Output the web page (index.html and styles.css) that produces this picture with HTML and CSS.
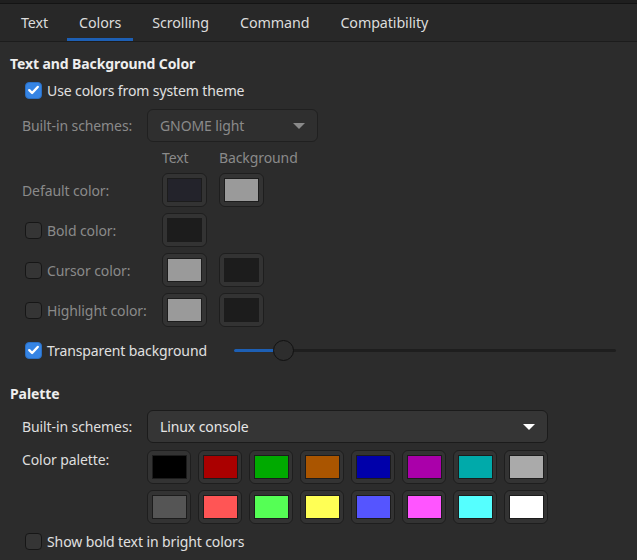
FILE: index.html
```html
<!DOCTYPE html>
<html>
<head>
<meta charset="utf-8">
<link rel="stylesheet" href="styles.css">
</head>
<body>
<div class="topstrip"></div>
<nav class="tabs">
  <div class="tab">Text</div>
  <div class="tab active">Colors</div>
  <div class="tab">Scrolling</div>
  <div class="tab">Command</div>
  <div class="tab">Compatibility</div>
</nav>
<main class="page">
  <h2 class="heading h1">Text and Background Color</h2>
  <label class="check-row r-sys"><span class="cb on"><svg viewBox="0 0 16 16"><path d="M3.5 8.2l3 3 6-6.4" /></svg></span><span>Use colors from system theme</span></label>

  <div class="scheme-row r-s1 disabled">
    <span class="lbl">Built-in schemes:</span>
    <div class="dropdown dis small"><span>GNOME light</span><span class="arrow"></span></div>
  </div>

  <div class="grid">
    <span></span><span class="colhead">Text</span><span class="colhead">Background</span>

    <span class="lbl dim">Default color:</span>
    <span class="cbtn"><span class="sw" style="background:#23232b"></span></span>
    <span class="cbtn"><span class="sw" style="background:#9a9a9a"></span></span>

    <span class="lbl dim lc"><span class="cb"></span>Bold color:</span>
    <span class="cbtn"><span class="sw" style="background:#1c1c1c"></span></span>
    <span></span>

    <span class="lbl dim lc"><span class="cb"></span>Cursor color:</span>
    <span class="cbtn"><span class="sw" style="background:#9a9a9a"></span></span>
    <span class="cbtn"><span class="sw" style="background:#1c1c1c"></span></span>

    <span class="lbl dim lc"><span class="cb"></span>Highlight color:</span>
    <span class="cbtn"><span class="sw" style="background:#9a9a9a"></span></span>
    <span class="cbtn"><span class="sw" style="background:#1c1c1c"></span></span>
  </div>

  <div class="trans-row">
    <label class="check-row"><span class="cb on"><svg viewBox="0 0 16 16"><path d="M3.5 8.2l3 3 6-6.4" /></svg></span><span>Transparent background</span></label>
    <div class="slider"><div class="fill"></div><div class="knob"></div></div>
  </div>

  <h2 class="heading h2">Palette</h2>
  <div class="scheme-row r-s2">
    <span class="lbl">Built-in schemes:</span>
    <div class="dropdown wide"><span>Linux console</span><span class="arrow"></span></div>
  </div>

  <div class="palette-row">
    <span class="lbl ptop">Color palette:</span>
    <div class="palette">
      <span class="cbtn"><span class="sw" style="background:#000000"></span></span>
      <span class="cbtn"><span class="sw" style="background:#aa0000"></span></span>
      <span class="cbtn"><span class="sw" style="background:#00aa00"></span></span>
      <span class="cbtn"><span class="sw" style="background:#aa5500"></span></span>
      <span class="cbtn"><span class="sw" style="background:#0000aa"></span></span>
      <span class="cbtn"><span class="sw" style="background:#aa00aa"></span></span>
      <span class="cbtn"><span class="sw" style="background:#00aaaa"></span></span>
      <span class="cbtn"><span class="sw" style="background:#aaaaaa"></span></span>
      <span class="cbtn"><span class="sw" style="background:#555555"></span></span>
      <span class="cbtn"><span class="sw" style="background:#ff5555"></span></span>
      <span class="cbtn"><span class="sw" style="background:#55ff55"></span></span>
      <span class="cbtn"><span class="sw" style="background:#ffff55"></span></span>
      <span class="cbtn"><span class="sw" style="background:#5555ff"></span></span>
      <span class="cbtn"><span class="sw" style="background:#ff55ff"></span></span>
      <span class="cbtn"><span class="sw" style="background:#55ffff"></span></span>
      <span class="cbtn"><span class="sw" style="background:#ffffff"></span></span>
    </div>
  </div>

  <label class="check-row r-bold"><span class="cb"></span><span>Show bold text in bright colors</span></label>
</main>
</body>
</html>
```

FILE: styles.css
```css
* { box-sizing: border-box; }
html, body {
  margin: 0;
  padding: 0;
  background: #2c2c2c;
  color: #dedede;
  font-family: "Noto Sans", "DejaVu Sans", sans-serif;
  font-size: 14px;
  letter-spacing: -0.1px;
  width: 637px;
  height: 560px;
  overflow: hidden;
}
.topstrip {
  height: 4px;
  background: #1f1f1f;
  border-bottom: 1px solid #141414;
}
.tabs {
  display: flex;
  gap: 7px;
  height: 38px;
  padding-left: 9px;
  background: #282828;
  border-bottom: 1px solid #1c1c1c;
}
.tab {
  padding: 0 12px;
  height: 37px;
  line-height: 37px;
  color: #dcdcdc;
  font-size: 14.3px;
  border-bottom: 3px solid transparent;
}
.tab.active { border-bottom-color: #1d5fb4; }

.page { padding-left: 10px; }
.heading {
  margin: 0;
  font-size: 14px;
  font-weight: bold;
  color: #eeeeee;
  height: 20px;
  line-height: 20px;
}
.h1 { margin-top: 12px; }
.h2 { margin-top: 24px; }

.check-row {
  display: flex;
  align-items: center;
  gap: 5px;
  height: 20px;
  padding-left: 15px;
  color: #e0e0e0;
}
.r-sys { margin-top: 6px; }
.r-bold { margin-top: 7px; }

.cb {
  width: 17px;
  height: 17px;
  border-radius: 4px;
  background: #353535;
  border: 1px solid #161616;
  display: inline-flex;
  align-items: center;
  justify-content: center;
  flex: none;
}
.cb.on {
  background: #3584e4;
  border-color: #2a6fc4;
}
.cb svg { width: 16px; height: 16px; }
.cb svg path {
  fill: none;
  stroke: #ffffff;
  stroke-width: 2.6;
  stroke-linecap: round;
  stroke-linejoin: round;
}

.scheme-row {
  display: flex;
  align-items: center;
  padding-left: 12px;
  height: 33px;
}
.r-s1 { margin-top: 9px; }
.r-s2 { margin-top: 6px; }
.scheme-row .lbl { width: 125px; flex: none; }
.disabled .lbl { color: #8a8a8a; }
.lbl { color: #dedede; }
.lbl.dim { color: #8a8a8a; }

.dropdown {
  height: 33px;
  display: flex;
  align-items: center;
  justify-content: space-between;
  padding: 0 12px;
  border-radius: 6px;
  background: #353535;
  border: 1px solid #1b1b1b;
  color: #e6e6e6;
}
.dropdown.small { width: 171px; }
.dropdown.wide { width: 401px; }
.dropdown.dis {
  background: #2f2f2f;
  border-color: #202020;
  color: #8a8a8a;
}
.arrow {
  width: 0;
  height: 0;
  border-left: 6px solid transparent;
  border-right: 6px solid transparent;
  border-top: 6px solid #ffffff;
}
.dropdown.dis .arrow { border-top-color: #8a8a8a; }

.grid {
  display: grid;
  grid-template-columns: 128px 45px 45px;
  column-gap: 12px;
  row-gap: 6px;
  padding-left: 12px;
  margin-top: 7px;
  grid-template-rows: 18px repeat(4, 34px);
  align-items: center;
}
.colhead { color: #8a8a8a; white-space: nowrap; line-height: 18px; }
.lc {
  display: flex;
  align-items: center;
  gap: 5px;
  margin-left: 3px;
  white-space: nowrap;
}

.cbtn {
  width: 45px;
  height: 34px;
  border-radius: 6px;
  background: #333333;
  border: 1px solid #1e1e1e;
  display: flex;
  align-items: center;
  justify-content: center;
}
.sw {
  width: 35px;
  height: 24px;
  border: 1px solid #1c1c1c;
  display: block;
}

.trans-row {
  display: flex;
  align-items: center;
  margin-top: 13px;
  height: 20px;
}
.trans-row .check-row { width: 224px; }
.slider {
  position: relative;
  width: 382px;
  height: 3px;
  border-radius: 2px;
  background: #1e1e1e;
}
.slider .fill {
  width: 42px;
  height: 3px;
  border-radius: 2px;
  background: #1d5fb4;
}
.slider .knob {
  position: absolute;
  left: 39px;
  top: -9px;
  width: 21px;
  height: 21px;
  border-radius: 50%;
  background: #2d2d2d;
  border: 1px solid #111111;
}

.palette-row {
  display: flex;
  padding-left: 12px;
  margin-top: 7px;
}
.palette-row .lbl { width: 125px; flex: none; line-height: 20px; }
.palette {
  display: grid;
  grid-template-columns: repeat(8, 44px);
  column-gap: 7px;
  row-gap: 6px;
}
.palette .cbtn { width: 44px; }
```
